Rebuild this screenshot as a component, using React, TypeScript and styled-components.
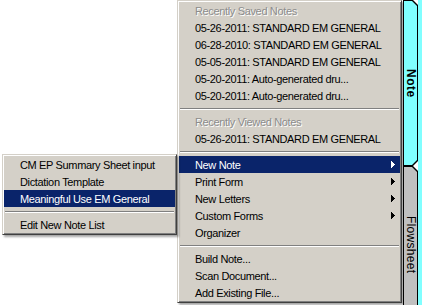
import React from "react";
import styled, { createGlobalStyle } from "styled-components";

type Entry =
  | { kind: "header"; label: string }
  | { kind: "item"; label: string; submenu?: boolean; active?: boolean }
  | { kind: "sep" };

const mainEntries: Entry[] = [
  { kind: "header", label: "Recently Saved Notes" },
  { kind: "item", label: "05-26-2011: STANDARD EM GENERAL" },
  { kind: "item", label: "06-28-2010: STANDARD EM GENERAL" },
  { kind: "item", label: "05-05-2011: STANDARD EM GENERAL" },
  { kind: "item", label: "05-20-2011: Auto-generated dru..." },
  { kind: "item", label: "05-20-2011: Auto-generated dru..." },
  { kind: "sep" },
  { kind: "header", label: "Recently Viewed Notes" },
  { kind: "item", label: "05-26-2011: STANDARD EM GENERAL" },
  { kind: "sep" },
  { kind: "item", label: "New Note", submenu: true, active: true },
  { kind: "item", label: "Print Form", submenu: true },
  { kind: "item", label: "New Letters", submenu: true },
  { kind: "item", label: "Custom Forms", submenu: true },
  { kind: "item", label: "Organizer" },
  { kind: "sep" },
  { kind: "item", label: "Build Note..." },
  { kind: "item", label: "Scan Document..." },
  { kind: "item", label: "Add Existing File..." },
];

const newNoteEntries: Entry[] = [
  { kind: "item", label: "CM EP Summary Sheet input" },
  { kind: "item", label: "Dictation Template" },
  { kind: "item", label: "Meaningful Use EM General", active: true },
  { kind: "sep" },
  { kind: "item", label: "Edit New Note List" },
];

const SubArrow: React.FC<{ color: string }> = ({ color }) => (
  <svg width="4" height="7" viewBox="0 0 4 7" shapeRendering="crispEdges">
    <rect x="0" y="0" width="1" height="7" fill={color} />
    <rect x="1" y="1" width="1" height="5" fill={color} />
    <rect x="2" y="2" width="1" height="3" fill={color} />
    <rect x="3" y="3" width="1" height="1" fill={color} />
  </svg>
);

const MenuList: React.FC<{ entries: Entry[] }> = ({ entries }) => (
  <>
    {entries.map((entry, i) => {
      if (entry.kind === "sep") return <Separator key={i} />;
      if (entry.kind === "header")
        return (
          <Row key={i}>
            <HeaderLabel>{entry.label}</HeaderLabel>
          </Row>
        );
      return (
        <Row key={i} $active={entry.active}>
          <Label>{entry.label}</Label>
          {entry.submenu && <SubArrow color={entry.active ? "#fff" : "#000"} />}
        </Row>
      );
    })}
  </>
);

const App: React.FC = () => {
  return (
    <Screen>
      <GlobalStyle />
      <Stage>
        <MainMenu>
          <MenuList entries={mainEntries} />
        </MainMenu>
        <FlyoutMenu>
          <MenuList entries={newNoteEntries} />
        </FlyoutMenu>
      </Stage>
      <TabColumn>
        <TabRail>
          <Tab $height={166}>
            <TabFace $selected>
              <TabText $selected>Note</TabText>
            </TabFace>
          </Tab>
          <Tab $height={158}>
            <TabFace>
              <TabText>Flowsheet</TabText>
            </TabFace>
          </Tab>
        </TabRail>
        <PageStrip />
        <WindowEdge />
      </TabColumn>
    </Screen>
  );
};

const GlobalStyle = createGlobalStyle`
  html, body {
    margin: 0;
    padding: 0;
    background: #fff;
    overflow: hidden;
  }
`;

const Screen = styled.div`
  display: flex;
  width: 425px;
  height: 305px;
  overflow: hidden;
  background: #fff;
  font-family: "Liberation Sans", Arial, sans-serif;
`;

const Stage = styled.div`
  flex: 1;
  position: relative;
  display: flex;
  justify-content: flex-end;
  align-items: flex-start;
  padding-right: 1px;
`;

const Menu = styled.div`
  box-sizing: border-box;
  background: #d4d0c8;
  padding: 1px;
  border: 1px solid;
  border-color: #d4d0c8 #404040 #404040 #d4d0c8;
  box-shadow: inset 1px 1px 0 #fff, inset -1px -1px 0 #808080,
    2px 2px 2px rgba(0, 0, 0, 0.35);
`;

const MainMenu = styled(Menu)`
  width: 225px;
`;

const FlyoutMenu = styled(Menu)`
  position: absolute;
  left: 2px;
  top: 154px;
  width: 175px;
  z-index: 2;
`;

const Row = styled.div<{ $active?: boolean }>`
  display: flex;
  align-items: center;
  height: 17px;
  padding: 0 5px 0 16px;
  background: ${({ $active }) => ($active ? "#0a246a" : "transparent")};
  color: ${({ $active }) => ($active ? "#fff" : "#000")};
  font-size: 11px;
  letter-spacing: -0.35px;
  white-space: nowrap;
`;

const Label = styled.span`
  flex: 1;
`;

const HeaderLabel = styled.span`
  flex: 1;
  color: #8c8c8c;
  text-shadow: 1px 1px 0 #fff;
`;

const Separator = styled.div`
  height: 9px;
  display: flex;
  align-items: center;
  padding: 0 1px;

  &::before {
    content: "";
    flex: 1;
    height: 0;
    border-top: 1px solid #808080;
    border-bottom: 1px solid #fff;
  }
`;

const TabColumn = styled.div`
  display: flex;
  width: 22px;
  height: 305px;
`;

const TabRail = styled.div`
  width: 15px;
  display: flex;
  flex-direction: column;
  overflow: hidden;
  background: #fff;
`;

const chamfer =
  "polygon(0 0, calc(100% - 5px) 0, 100% 5px, 100% calc(100% - 5px), calc(100% - 5px) 100%, 0 100%)";

const Tab = styled.div<{ $height: number }>`
  flex: 0 0 ${({ $height }) => $height}px;
  display: flex;
  padding: 0 1px;
  background: #000;
  clip-path: ${chamfer};
`;

const TabFace = styled.div<{ $selected?: boolean }>`
  flex: 1;
  display: flex;
  align-items: center;
  justify-content: center;
  margin: 1px 0;
  background: ${({ $selected }) => ($selected ? "#80ffff" : "#c0c0c0")};
  clip-path: ${chamfer};
`;

const TabText = styled.span<{ $selected?: boolean }>`
  writing-mode: vertical-rl;
  font-size: 12px;
  font-weight: ${({ $selected }) => ($selected ? 700 : 400)};
  letter-spacing: ${({ $selected }) => ($selected ? "0.5px" : "0.3px")};
  color: #000;
  line-height: 13px;
`;

const PageStrip = styled.div`
  width: 4px;
  background: #80ffff;
`;

const WindowEdge = styled.div`
  width: 3px;
  background: #fff;
`;

export default App;
